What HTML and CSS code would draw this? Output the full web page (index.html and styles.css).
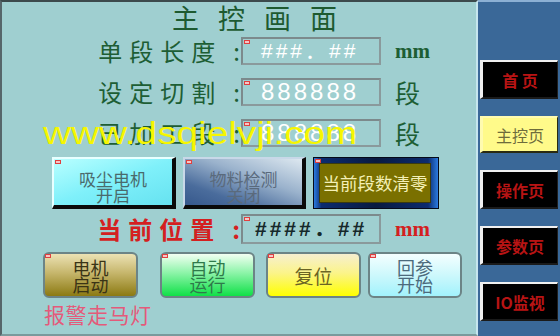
FILE: index.html
```html
<!DOCTYPE html>
<html lang="zh">
<head>
<meta charset="utf-8">
<title>主控画面</title>
<link rel="stylesheet" href="styles.css">
</head>
<body>
<div class="screen">
  <main class="panel">
    <h1 class="title">主控画面</h1>
    <div class="field first">
      <span class="label">单段长度<span class="colon">:</span></span>
      <span class="box"><i class="tag"></i><span class="val">###．##</span></span>
      <span class="unit mm">mm</span>
    </div>
    <div class="field">
      <span class="label">设定切割<span class="colon">:</span></span>
      <span class="box"><i class="tag"></i><span class="val num">888888</span></span>
      <span class="unit">段</span>
    </div>
    <div class="field">
      <span class="label">已加工段<span class="colon">:</span></span>
      <span class="box"><i class="tag"></i><span class="val num">888888</span></span>
      <span class="unit">段</span>
    </div>
    <div class="btnrow">
      <button class="b3d cyan"><i class="tag"></i>吸尘电机<br>开启</button>
      <button class="b3d blue"><i class="tag"></i>物料检测<br>关闭</button>
      <button class="clear"><i class="tag"></i><span class="clear-in">当前段数清零</span></button>
    </div>
    <div class="field pos">
      <span class="label">当前位置<span class="colon">:</span></span>
      <span class="box"><i class="tag"></i><span class="val dark">####．##</span></span>
      <span class="unit mm red">mm</span>
    </div>
    <div class="bottom">
      <button class="rb olive"><i class="tag"></i>电机<br>启动</button>
      <button class="rb green"><i class="tag"></i>自动<br>运行</button>
      <button class="rb yellow"><i class="tag"></i>复位</button>
      <button class="rb ice"><i class="tag"></i>回参<br>开始</button>
    </div>
    <div class="alarm">报警走马灯</div>
    <div class="watermark">www.dsqielvji.com</div>
  </main>
  <nav class="side">
    <button class="nav">首 页</button>
    <button class="nav active">主控页</button>
    <button class="nav">操作页</button>
    <button class="nav">参数页</button>
    <button class="nav">IO监视</button>
  </nav>
</div>
</body>
</html>
```
FILE: styles.css
```css
* { box-sizing: border-box; }
html, body { margin: 0; padding: 0; }
body {
  width: 560px;
  height: 336px;
  overflow: hidden;
  font-family: "Noto Sans CJK SC", sans-serif;
  background: #3a6898;
}
.screen {
  display: flex;
  width: 560px;
  height: 336px;
}
.panel {
  position: relative;
  width: 478px;
  height: 336px;
  background: #9fcfd0;
  border-left: 2px solid #56666a;
  border-top: 2px solid #3c4a4c;
  border-right: 2px solid #c6e6ee;
  border-bottom: 2px solid #7a9a9c;
  padding-top: 1px;
  display: flex;
  flex-direction: column;
}
.title {
  margin: 0 0 0 170px;
  font-size: 27px;
  line-height: 30px;
  min-height: 30px;
  font-weight: 400;
  letter-spacing: 19px;
  color: #1d5a30;
  white-space: nowrap;
}
.field {
  display: grid;
  grid-template-columns: 239px 140px auto;
  align-items: center;
  height: 28px;
  margin-top: 13px;
}
.field.first { margin-top: 4px; }
.label {
  text-align: right;
  font-size: 24px;
  line-height: 28px;
  letter-spacing: 7px;
  color: #1d5e34;
  white-space: nowrap;
}
.colon {
  letter-spacing: 0;
  margin-left: 11px;
  margin-right: 1px;
}
.box {
  position: relative;
  height: 28px;
  border: 2px solid #7c8a8c;
  border-right-color: #8a9a9c;
  border-bottom-color: #8a9a9c;
  display: flex;
  align-items: center;
  padding-left: 18px;
}
.tag {
  position: absolute;
  left: 1px;
  top: 1px;
  width: 6px;
  height: 4px;
  border: 1px solid #e04040;
  background: #f6c6c6;
}
.val {
  font-family: "Liberation Sans", "Noto Sans CJK SC", sans-serif;
  font-size: 21px;
  line-height: 24px;
  letter-spacing: 3px;
  color: #ffffff;
  white-space: nowrap;
}
.val.num { font-size: 24px; letter-spacing: 3px; }
.val.dark { color: #16282a; font-weight: 700; letter-spacing: 3px; margin-left: -6px; }
.unit {
  margin-left: 14px;
  font-size: 25px;
  line-height: 28px;
  color: #1d5e34;
}
.unit.mm {
  font-family: "Liberation Serif", serif;
  font-weight: 700;
  font-size: 21px;
}
.unit.red { color: #d42020; }
.btnrow {
  display: flex;
  margin-top: 10px;
  margin-left: 50px;
  gap: 7px;
  height: 52px;
}
button {
  font-family: "Noto Sans CJK SC", sans-serif;
  padding: 0;
  margin: 0;
  cursor: default;
}
.b3d {
  position: relative;
  width: 124px;
  height: 52px;
  border-style: solid;
  border-width: 2px 4px 4px 2px;
  border-color: #e8ffff #0a0a0a #0a0a0a #e8ffff;
  font-size: 17px;
  line-height: 16px;
  padding-top: 10px;
  padding-bottom: 0;
}
.b3d.cyan {
  background: linear-gradient(160deg, #b8ffff 0%, #7ff0fa 50%, #66e2f0 100%);
  color: #4a6a6c;
}
.b3d.blue {
  width: 123px;
  background: linear-gradient(200deg, #dde8f0 0%, #9ab2cc 40%, #4a6c9c 75%, #36588c 100%);
  border-top-color: #c8d8e8;
  border-left-color: #c8d8e8;
  color: #5a6a7c;
}
.clear {
  position: relative;
  width: 126px;
  height: 52px;
  border: 1px solid #050a18;
  padding: 5px 7px 5px 5px;
  background: linear-gradient(90deg, #2a7ae0 0%, #0c2c70 6%, #081a40 50%, #0c2c70 92%, #2a7ae0 100%);
  display: flex;
}
.clear-in {
  flex: 1;
  background: #7a7000;
  border: 1px solid #3a3a10;
  color: #f4f0b6;
  font-size: 17.5px;
  line-height: 38px;
  letter-spacing: 0;
  white-space: nowrap;
}
.field.pos { margin-top: 5px; height: 30px; }
.pos .label {
  color: #d42020;
  font-weight: 700;
  letter-spacing: 7px;
}
.pos .box { height: 30px; }
.bottom {
  display: flex;
  margin-top: 8px;
  margin-left: 41px;
  height: 46px;
}
.rb {
  position: relative;
  width: 95px;
  height: 46px;
  border: 2px solid #6c8486;
  border-radius: 6px;
  font-size: 18px;
  line-height: 17px;
  padding-top: 1px;
}
.rb .tag { left: 0; top: 0; }
.rb.olive {
  background: linear-gradient(180deg, #ece2b4 0%, #c6b66c 45%, #8c7a12 100%);
  color: #3a3416;
}
.rb.green {
  margin-left: 22px;
  background: linear-gradient(180deg, #f2fff2 0%, #8cf4a8 45%, #10e048 100%);
  color: #2e7a4a;
}
.rb.yellow {
  margin-left: 11px;
  background: linear-gradient(180deg, #f6efd0 0%, #fbf48a 45%, #ffff00 100%);
  color: #6a6424;
  font-size: 19px;
}
.rb.ice {
  margin-left: 7px;
  width: 94px;
  background: linear-gradient(180deg, #f4ffff 0%, #cdf8fc 50%, #a2f2fc 100%);
  color: #4c6a7c;
}
.alarm {
  margin-left: 42px;
  margin-top: 3px;
  font-size: 21px;
  line-height: 26px;
  letter-spacing: 0.5px;
  color: #e45a7a;
}
.watermark {
  position: absolute;
  left: 41px;
  top: 117px;
  font-family: "Liberation Sans", sans-serif;
  font-size: 31px;
  line-height: 30px;
  color: #f6f600;
  white-space: nowrap;
  transform: scaleX(1.25);
  transform-origin: 0 0;
  pointer-events: none;
}
.side {
  width: 82px;
  height: 336px;
  background: #3a6898;
  border-top: 2px solid #8cb0d4;
  padding-top: 58px;
  padding-left: 2px;
  display: flex;
  flex-direction: column;
  gap: 17px;
}
.nav {
  width: 78px;
  height: 39px;
  background: #000;
  border-style: solid;
  border-width: 2px 1px 2px 3px;
  border-color: #f0f0f0 #202020 #1a1a1a #f0f0f0;
  color: #b81414;
  font-family: "Noto Sans CJK SC", serif;
  font-weight: 700;
  font-size: 16px;
  white-space: pre;
}
.nav.active {
  background: #fffa8a;
  border-color: #fffbb0 #2a2a10 #2a2a10 #fffbb0;
  color: #6e6c3c;
  font-weight: 400;
  height: 37px;
}
```
